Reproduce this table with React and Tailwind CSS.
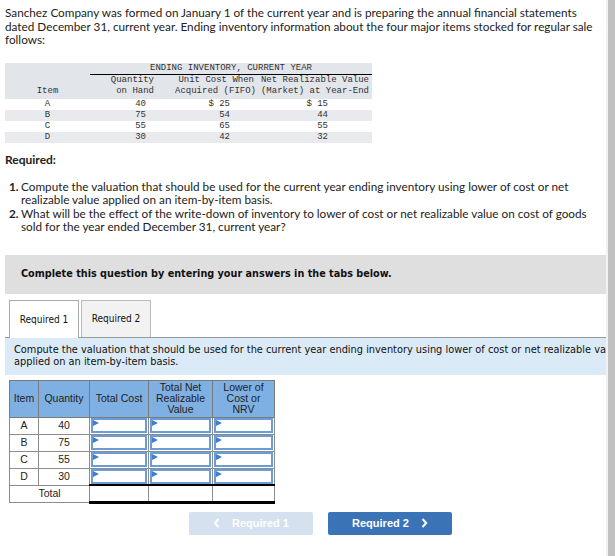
import React from "react";

const Flag = () => (
  <svg className="absolute left-0 top-0" width="6" height="6" viewBox="0 0 6 6">
    <polygon points="0,0 6,3 0,6" fill="#3b7fd4" />
  </svg>
);

const InputCell = () => (
  <td className="border border-[#8c8c8c] p-0 h-[17px]">
    <div className="relative h-[15px] mx-[1px] border-2 border-[#6d9bd3] bg-white">
      <Flag />
    </div>
  </td>
);

const inv = [
  ["A", "40", "$ 25", "$ 15"],
  ["B", "75", "54", "44"],
  ["C", "55", "65", "55"],
  ["D", "30", "42", "32"],
];

export default function App() {
  return (
    <div className="flex w-[615px] min-h-[556px] bg-white">
      <div className="w-[606px] overflow-hidden pl-[5px] pt-[6px] text-[#222]">
        <p className="font-['Lato',sans-serif] text-[11.75px] leading-[13.5px] whitespace-nowrap">
          Sanchez Company was formed on January 1 of the current year and is preparing the annual financial statements
          <br />dated December 31, current year. Ending inventory information about the four major items stocked for regular sale
          <br />follows:
        </p>

        <div className="mt-[16px] w-[367px] font-['Liberation_Mono',monospace] text-[9px] leading-[11px] text-[#333]">
          <div className="bg-[#e2e5ea] pb-[2px]">
            <div className="grid grid-cols-[85px_282px]">
              <div />
              <div className="text-center border-b border-black h-[12px]">ENDING INVENTORY, CURRENT YEAR</div>
            </div>
            <div className="grid grid-cols-[85px_85px_82px_115px]">
              <div className="flex items-end justify-center">Item</div>
              <div className="text-right pr-[21px]">Quantity<br />on Hand</div>
              <div className="text-right pr-[3px] whitespace-nowrap">Unit Cost When<br />Acquired (FIFO)</div>
              <div className="text-right pr-[3px] whitespace-nowrap">Net Realizable Value<br />(Market) at Year-End</div>
            </div>
          </div>
          {inv.map((r, i) => (
            <div key={r[0]} className={`grid grid-cols-[85px_85px_82px_115px] h-[11px] ${i % 2 === 1 ? "bg-[#e8eaee]" : "bg-white"}`}>
              <div className="text-center">{r[0]}</div>
              <div className="text-right pr-[29px]">{r[1]}</div>
              <div className="text-right pr-[27px]">{r[2]}</div>
              <div className="text-right pr-[44px]">{r[3]}</div>
            </div>
          ))}
        </div>

        <div className="mt-[8px] font-['Lato',sans-serif] text-[12px] font-bold">Required:</div>
        <ol className="mt-[11px] font-['Lato',sans-serif] text-[11.75px] leading-[13.5px] whitespace-nowrap">
          <li className="flex">
            <span className="w-[16px] pl-[4px] font-bold shrink-0">1.</span>
            <span>Compute the valuation that should be used for the current year ending inventory using lower of cost or net<br />realizable value applied on an item-by-item basis.</span>
          </li>
          <li className="flex">
            <span className="w-[16px] pl-[4px] font-bold shrink-0">2.</span>
            <span>What will be the effect of the write-down of inventory to lower of cost or net realizable value on cost of goods<br />sold for the year ended December 31, current year?</span>
          </li>
        </ol>

        <div className="mt-[21px] h-[39px] bg-[#dfdfdf] flex items-center pl-[16px] font-['DejaVu_Sans_Condensed','DejaVu_Sans',sans-serif] font-bold text-[10.75px] text-[#111]">
          Complete this question by entering your answers in the tabs below.
        </div>

        <div className="mt-[6px] flex pl-[4px] font-['DejaVu_Sans_Condensed','DejaVu_Sans',sans-serif] text-[10px] text-[#111]">
          <div className="w-[70px] h-[38px] border border-b-0 border-[#aaa] bg-white flex items-center justify-center relative z-10 -mb-px">Required 1</div>
          <div className="ml-[2px] w-[70px] h-[37px] border border-b-0 border-[#bbb] bg-[#f2f2f2] flex items-center justify-center">Required 2</div>
        </div>
        <div className="border-t border-[#999] bg-[#dbeaf7] h-[38px] pl-[9px] pt-[6px] font-['DejaVu_Sans',sans-serif] text-[9.8px] leading-[12px] text-[#111] whitespace-nowrap overflow-hidden">
          Compute the valuation that should be used for the current year ending inventory using lower of cost or net realizable value
          <br />applied on an item-by-item basis.
        </div>

        <table className="mt-[5px] ml-[4px] border-collapse font-['Liberation_Sans',sans-serif] text-[10.5px] text-[#222] leading-[11px]">
          <thead>
            <tr className="bg-[#7fb0e3] h-[37px]">
              <th className="w-[29px] border border-[#7a7a7a] font-normal">Item</th>
              <th className="w-[51px] border border-[#7a7a7a] font-normal">Quantity</th>
              <th className="w-[59px] border border-[#7a7a7a] font-normal">Total Cost</th>
              <th className="w-[64px] border border-[#7a7a7a] font-normal">Total Net<br />Realizable<br />Value</th>
              <th className="w-[62px] border border-[#7a7a7a] font-normal">Lower of<br />Cost or<br />NRV</th>
            </tr>
          </thead>
          <tbody>
            {inv.map((r) => (
              <tr key={r[0]} className="h-[17px]">
                <td className="border border-[#8c8c8c] text-center">{r[0]}</td>
                <td className="border border-[#8c8c8c] text-center">{r[1]}</td>
                <InputCell />
                <InputCell />
                <InputCell />
              </tr>
            ))}
            <tr className="h-[17px]">
              <td colSpan={2} className="border border-[#8c8c8c] text-center">Total</td>
              <td className="border-x border-x-[#8c8c8c] border-t-2 border-t-black border-b-[3px] border-b-black" />
              <td className="border-x border-x-[#8c8c8c] border-t-2 border-t-black border-b-[3px] border-b-black" />
              <td className="border-x border-x-[#8c8c8c] border-t-2 border-t-black border-b-[3px] border-b-black" />
            </tr>
          </tbody>
        </table>

        <div className="mt-[8px] ml-[184px] flex gap-[15px] font-['Liberation_Sans',sans-serif] font-bold text-[11px] text-white">
          <div className="w-[124px] h-[23px] rounded-[2px] bg-[#d5e1ef] flex items-center justify-center gap-[12px]">
            <svg width="7" height="10" viewBox="0 0 7 10"><path d="M5.5 1 L1.8 5 L5.5 9" stroke="white" strokeWidth="2" fill="none" /></svg>
            <span>Required 1</span>
          </div>
          <div className="w-[124px] h-[23px] rounded-[2px] bg-[#3a74b6] flex items-center justify-center gap-[12px]">
            <span>Required 2</span>
            <svg width="7" height="10" viewBox="0 0 7 10"><path d="M1.5 1 L5.2 5 L1.5 9" stroke="white" strokeWidth="2" fill="none" /></svg>
          </div>
        </div>
      </div>
      <div className="w-[9px] flex shrink-0">
        <div className="w-[2px] bg-[#f1f1f1]" />
        <div className="flex-1 bg-[#c1c1c1]" />
      </div>
    </div>
  );
}
